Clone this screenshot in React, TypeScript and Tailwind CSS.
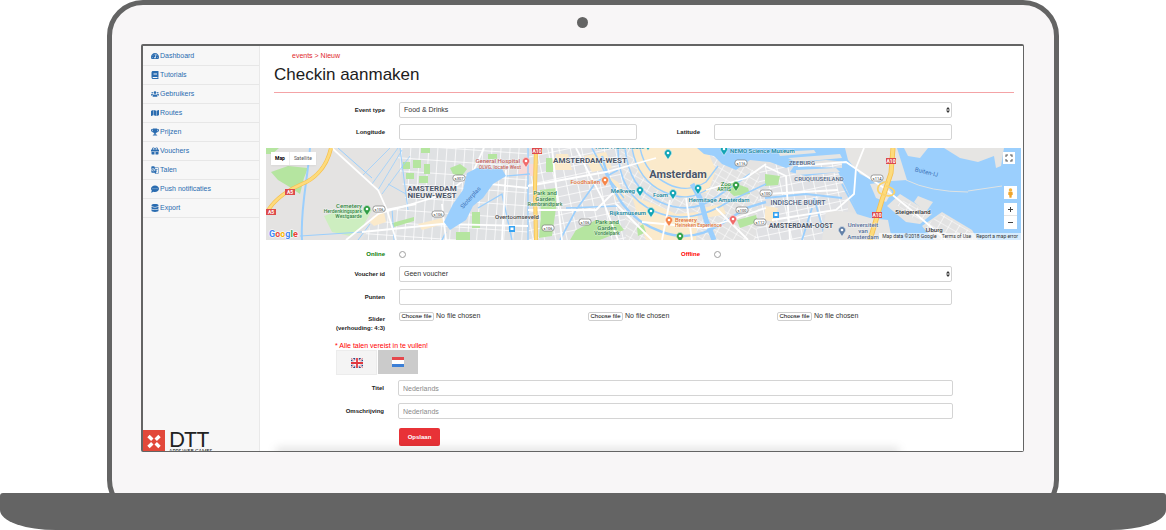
import React from 'react';
import {
  FaBook,
  FaCommentDots,
  FaDatabase,
  FaGift,
  FaMap,
  FaTachometerAlt,
  FaTrophy,
  FaUsers,
} from 'react-icons/fa';
import { MdFullscreen, MdGTranslate } from 'react-icons/md';

const navItems = [
  { label: 'Dashboard', icon: FaTachometerAlt },
  { label: 'Tutorials', icon: FaBook },
  { label: 'Gebruikers', icon: FaUsers },
  { label: 'Routes', icon: FaMap },
  { label: 'Prijzen', icon: FaTrophy },
  { label: 'Vouchers', icon: FaGift },
  { label: 'Talen', icon: MdGTranslate },
  { label: 'Push notificaties', icon: FaCommentDots },
  { label: 'Export', icon: FaDatabase },
];

const fieldClass =
  'block h-4 w-full rounded-xs border border-[#d4d4d4] bg-white px-1 text-[7px] leading-[14px] text-[#333] placeholder:text-[#8a8a8a]';
const labelClass = 'text-right text-[6px] font-bold text-[#222]';

function Sidebar() {
  return (
    <aside className="flex w-[117px] shrink-0 flex-col border-r border-[#e9e9e9] bg-[#f7f7f7] pt-px">
      <nav>
        {navItems.map(({ label, icon: Icon }) => (
          <a
            key={label}
            href="#"
            className="flex h-[19px] items-center gap-px border-b border-[#e7e7e7] pl-2 text-[7px] text-[#2a6cb0]"
          >
            <Icon className="size-2" />
            {label}
          </a>
        ))}
      </nav>
      <div className="mt-auto flex h-[21px] gap-1 overflow-hidden">
        <svg viewBox="0 0 22 22" className="size-[22px] shrink-0">
          <rect width="22" height="22" fill="#e2483a" />
          <path d="M5.5 6 L9.3 9.8 M16.5 6 L12.7 9.8 M5.5 17 L9.3 13.2 M16.5 17 L12.7 13.2" stroke="#fff" strokeWidth="3.4" />
        </svg>
        <div className="font-[Lato,sans-serif] text-[#222]">
          <div className="text-[21px] leading-[18px]">DTT</div>
          <div className="text-[5px] leading-[6px] whitespace-nowrap">APPS WEB GAMES</div>
        </div>
      </div>
    </aside>
  );
}

const places = [
  { text: 'General Hospital', x: 254, y: 15, size: 6, fill: '#bf625b', anchor: 'end' },
  { text: 'OLVG, locatie West', x: 255, y: 21, size: 5, fill: '#bf625b', anchor: 'end' },
  { text: 'Cemetery', x: 96, y: 60, size: 6, fill: '#2f8540', anchor: 'end' },
  { text: 'Herdenkingspark', x: 96, y: 65, size: 5, fill: '#2f8540', anchor: 'end' },
  { text: 'Westgaarde', x: 96, y: 70, size: 5, fill: '#2f8540', anchor: 'end' },
  { text: 'Overtoomseveld', x: 229, y: 71, size: 6, fill: '#444', anchor: 'start' },
  { text: 'Foodhallen', x: 334, y: 36, size: 6, fill: '#e07234', anchor: 'end' },
  { text: 'Park and', x: 279, y: 47, size: 6, fill: '#37834a', anchor: 'middle' },
  { text: 'Garden', x: 279, y: 53, size: 6, fill: '#37834a', anchor: 'middle' },
  { text: 'Rembrandtpark', x: 279, y: 58, size: 5, fill: '#37834a', anchor: 'middle' },
  { text: 'Park and', x: 341, y: 76, size: 6, fill: '#37834a', anchor: 'middle' },
  { text: 'Garden', x: 341, y: 82, size: 6, fill: '#37834a', anchor: 'middle' },
  { text: 'Vondelpark', x: 341, y: 87, size: 5, fill: '#37834a', anchor: 'middle' },
  { text: 'Anne Frank House', x: 354, y: 1, size: 6, fill: '#12839a', anchor: 'middle' },
  { text: 'Melkweg', x: 369, y: 45, size: 6, fill: '#12839a', anchor: 'end' },
  { text: 'Foam', x: 402, y: 49, size: 6, fill: '#12839a', anchor: 'end' },
  { text: 'Rijksmuseum', x: 380, y: 67, size: 6, fill: '#12839a', anchor: 'end' },
  { text: 'Hermitage Amsterdam', x: 453, y: 54, size: 6, fill: '#12839a', anchor: 'middle' },
  { text: 'NEMO Science Museum', x: 464, y: 5, size: 6, fill: '#12839a', anchor: 'start' },
  { text: 'Brewery', x: 409, y: 74, size: 6, fill: '#e07234', anchor: 'start' },
  { text: 'Heineken Experience', x: 409, y: 79, size: 5, fill: '#e07234', anchor: 'start' },
  { text: 'Zoo', x: 465, y: 38, size: 6, fill: '#2f8540', anchor: 'end' },
  { text: 'ARTIS', x: 465, y: 43, size: 5, fill: '#2f8540', anchor: 'end' },
  { text: 'ZEEBURG', x: 536, y: 17, size: 6, fill: '#4d6180', anchor: 'middle' },
  { text: 'CRUQUIUSEILAND', x: 553, y: 33, size: 6, fill: '#4d6180', anchor: 'middle' },
  { text: 'INDISCHE BUURT', x: 532, y: 57, size: 7, fill: '#4d6180', anchor: 'middle' },
  { text: 'Universiteit', x: 597, y: 79, size: 6, fill: '#506b96', anchor: 'middle' },
  { text: 'van', x: 597, y: 85, size: 6, fill: '#506b96', anchor: 'middle' },
  { text: 'Amsterdam', x: 597, y: 91, size: 6, fill: '#506b96', anchor: 'middle' },
  { text: 'Steigereiland', x: 647, y: 66, size: 6, fill: '#333', anchor: 'middle' },
  { text: 'IJburg', x: 668, y: 84, size: 6, fill: '#333', anchor: 'middle' },
] as const;

const districts = [
  { text: 'AMSTERDAM', x: 166, y: 43, size: 8 },
  { text: 'NIEUW-WEST', x: 166, y: 50, size: 8 },
  { text: 'AMSTERDAM-WEST', x: 324, y: 15, size: 8 },
  { text: 'Amsterdam', x: 412, y: 30, size: 11 },
  { text: 'AMSTERDAM-OOST', x: 535, y: 80, size: 7 },
];

const pins = [
  { x: 101, y: 62, fill: '#2f9e44' },
  { x: 260, y: 14, fill: '#f06a6a' },
  { x: 339, y: 33, fill: '#f58549' },
  { x: 374, y: 43, fill: '#12a4b5' },
  { x: 407, y: 46, fill: '#12a4b5' },
  { x: 385, y: 64, fill: '#12a4b5' },
  { x: 432, y: 41, fill: '#12a4b5' },
  { x: 403, y: 73, fill: '#f58549' },
  { x: 470, y: 38, fill: '#2f9e44' },
  { x: 402, y: 6, fill: '#12a4b5' },
  { x: 458, y: 2, fill: '#12a4b5' },
  { x: 382, y: -3, fill: '#12a4b5' },
  { x: 467, y: 72, fill: '#f06a6a' },
  { x: 414, y: 89, fill: '#2f9e44' },
  { x: 576, y: 83, fill: '#6482a8' },
];

const roadSigns = [
  { text: 's307', x: 193, y: 30 },
  { text: 's106', x: 113, y: 61 },
  { text: 's106', x: 172, y: 66 },
  { text: 's106', x: 282, y: 80 },
  { text: 's106', x: 319, y: 74 },
  { text: 's116', x: 475, y: 15 },
  { text: 's100', x: 476, y: 62 },
  { text: 's112', x: 494, y: 74 },
  { text: 's100', x: 500, y: 45 },
  { text: 's114', x: 611, y: 30 },
];

const motorwaySigns = [
  { text: 'A5', x: 24, y: 44 },
  { text: 'A5', x: 5, y: 64 },
  { text: 'A10', x: 271, y: 3 },
  { text: 'A10', x: 625, y: 13 },
  { text: 'A10', x: 611, y: 67 },
];

function CityMap() {
  return (
    <svg
      viewBox="0 0 755 92"
      preserveAspectRatio="xMidYMid slice"
      className="block h-[92px] w-full font-[Roboto,sans-serif]"
      role="img"
      aria-label="Amsterdam"
    >
      <defs>
        <pattern id="blocks" width="11" height="9" patternUnits="userSpaceOnUse" patternTransform="rotate(-12)">
          <rect width="11" height="9" fill="#e0e1e4" />
          <path d="M0 0 H11 M0 0 V9" stroke="#fff" strokeWidth="1.6" />
        </pattern>
        <pattern id="blocksWest" width="9" height="13" patternUnits="userSpaceOnUse" patternTransform="rotate(4)">
          <rect width="9" height="13" fill="#dfe1e3" />
          <path d="M0 0 H9 M0 0 V13" stroke="#fff" strokeWidth="1.5" />
        </pattern>
        <pattern id="blocksEast" width="9" height="7" patternUnits="userSpaceOnUse" patternTransform="rotate(30)">
          <rect width="9" height="7" fill="#e2e2e2" />
          <path d="M0 0 H9 M0 0 V7" stroke="#fff" strokeWidth="1.2" />
        </pattern>
      </defs>

      <rect width="755" height="92" fill="#e4e3e2" />
      <path d="M130 0 H262 V92 H96 L112 66 L140 56 Z" fill="url(#blocksWest)" />
      <path d="M262 0 H360 L372 92 H262 Z" fill="url(#blocks)" />
      <path d="M355 0 H450 L500 30 L500 92 H360 Z" fill="url(#blocksEast)" />
      <path d="M494 16 H582 V92 H490 Z" fill="url(#blocks)" />

      {/* commercial areas */}
      <g fill="#fbeacb">
        <path d="M366 0 H440 L450 22 L442 44 L418 50 L390 42 L372 24 Z" />
        <path d="M366 48 L388 56 L410 66 L432 64 L430 92 H380 L374 76 Z" />
        <path d="M290 6 H302 L306 22 H288 Z M342 28 L352 34 L360 50 L350 52 Z" />
        <path d="M318 8 L340 4 L346 20 L326 24 Z" />
        <path d="M107 68 L118 64 L120 74 L108 78 L104 74 Z" />
        <path d="M152 76 L176 70 L178 76 L156 82 Z" />
        <path d="M436 60 L456 56 L460 66 L440 70 Z" />
        <path d="M499 58 L512 60 L508 74 L499 72 Z" />
      </g>
      <path d="M254 16 H268 V28 H252 Z" fill="#f7dad8" />

      {/* parks */}
      <g fill="#b5e5a0">
        <path d="M0 0 H13 L6 6 H0 Z" />
        <path d="M5 24 L22 18 L42 20 L38 30 L34 46 L22 38 L12 32 Z" />
        <path d="M184 20 L194 16 L201 21 L196 28 L187 26 Z" />
        <path d="M126 75 L148 69 V73 L128 79 Z" />
        <path d="M137 14 h7 v7 h-7 z M147 12 h8 v8 h-8 z M158 16 h6 v10 h-6 z M140 25 h8 v6 h-8 z M153 28 h9 v7 h-9 z" />
        <path d="M155 0 h9 v5 h-9 z M222 6 h9 v5 h-9 z M206 64 h8 v16 h-8 z M190 84 h14 v8 h-14 z" />
        <path d="M274 42 L290 40 L290 60 L286 88 L273 90 L275 66 Z" />
        <path d="M304 92 L310 82 L330 72 L352 74 L358 82 L334 92 Z" />
        <path d="M371 80 L377 76 L380 84 L372 88 Z" />
        <path d="M457 38 L466 34 L482 40 L484 46 L468 48 Z" />
        <path d="M471 72 L490 67 L492 74 L474 80 Z" />
        <path d="M499 26 L514 28 L512 37 L499 38 Z" />
        <path d="M569 73 L582 75 L580 81 L571 79 Z" />
        <path d="M280 10 h7 v14 h-7 z" />
      </g>
      <path d="M58 68 L80 60 L106 62 L96 80 L84 88 L66 84 Z" fill="#cdeec0" />

      {/* water */}
      <g fill="#9bcffd">
        <path d="M431 0 H582 V14 L560 12 L536 14 L520 20 L504 14 L484 12 L470 22 L456 16 L448 8 L438 6 Z" />
        <path d="M576 0 H755 V92 H636 L616 80 L610 92 H600 L592 66 L580 40 L572 24 L540 28 L524 24 L528 18 L576 20 Z" />
      </g>
      <g fill="none" stroke="#9bcffd">
        <path d="M359 0 C362 28 372 44 394 54 S436 60 452 48 L484 26" strokeWidth="1.6" />
        <path d="M352 0 C352 34 366 54 390 64 S440 68 462 54 L500 36" strokeWidth="1.6" />
        <path d="M366 0 C370 22 380 36 398 44 S428 50 444 40" strokeWidth="1.4" />
        <path d="M374 0 C378 18 386 28 402 36 S430 40 440 34 L452 18" strokeWidth="1.4" />
        <path d="M336 8 C346 48 362 72 396 84 S450 80 480 60 L500 54" strokeWidth="2.4" />
        <path d="M426 36 L434 50 L440 72 L448 92" strokeWidth="5" />
        <path d="M44 0 C42 30 34 60 36 92" strokeWidth="2" />
        <path d="M262 0 L262 92 M240 28 L264 26 M212 60 L236 46 L246 92 M180 84 L176 92" strokeWidth="1.4" />
        <path d="M294 92 L310 62 L330 34 L352 22 M326 0 L342 30 L358 50 M300 60 L352 58" strokeWidth="1.6" />
        <path d="M112 42 L136 2 M116 46 L144 8 M96 28 L124 0 M122 36 L140 46 M106 36 L132 0" strokeWidth=".8" />
        <path d="M134 0 L142 62 M34 88 L96 84 M92 92 L104 76 M126 60 L128 92 M72 0 L106 30" strokeWidth="1" />
        <path d="M499 50 L540 46 L576 50 M548 50 L560 92 M576 36 L592 66 L580 92 M536 92 L546 60" strokeWidth="1.8" />
      </g>

      {/* land in the IJ */}
      <g fill="#e6e5e3">
        <path d="M579 0 H631 L641 32 L610 34 L594 26 L582 12 Z" />
        <path d="M638 0 H662 L654 10 L642 8 Z" />
        <path d="M678 0 H738 L735 18 L730 20 L728 8 L712 14 L694 10 Z" />
        <path d="M621 58 L634 46 L666 66 L654 76 L640 74 Z" />
        <path d="M652 48 L667 54 L660 64 L648 54 Z" />
        <path d="M656 78 L676 64 L706 82 L712 92 H668 Z" />
        <path d="M560 62 L584 64 L604 70 L622 72 L626 92 H556 Z" />
        <path d="M604 36 L618 34 L626 44 L620 54 L610 50 Z" />
        <path d="M512 4 L548 2 L550 5 L514 8 Z M522 10 L574 6 L576 10 L530 14 Z M530 22 L570 20 L574 24 L530 27 Z" />
      </g>
      <path d="M657 79 L676 66 L704 83 L708 92 H670 Z" fill="url(#blocksEast)" />
      <path d="M630 56 L640 52 L662 66 L652 74 Z" fill="url(#blocksEast)" />
      <path d="M702 43 L736 38 M702 44 Q664 44 640 32" fill="none" stroke="#dfe3e3" strokeWidth="1" />

      {/* roads */}
      <g fill="none" stroke="#fff" strokeWidth="1.8">
        <path d="M66 0 L112 42 L121 62 L130 92" />
        <path d="M80 92 L112 66 L180 46 L206 26 L218 0" />
        <path d="M96 84 L176 76 L262 78 M176 56 L180 92" />
        <path d="M120 62 L150 56 M240 22 L236 92 M224 36 L262 40" />
        <path d="M262 38 L340 24 L390 10 M286 0 L296 92 M262 62 L330 62 L352 40" />
        <path d="M310 0 L336 50 L352 92 M350 56 L386 92 M376 74 L440 80 L500 60" />
        <path d="M440 42 L480 30 L500 16 M450 60 L482 92 M404 52 L396 92 M420 50 L426 92" />
        <path d="M499 18 L520 28 L524 92 M500 46 L572 42 M506 72 L570 62 L588 46 L590 20 L598 0" />
        <path d="M532 18 L580 14 L618 40 L650 66 L680 92" />
      </g>
      <path
        d="M201 25 L211 20 L236 21 L240 28 L227 36 L217 50 L207 58 L200 72 L184 82 L178 74 L187 56 L197 42 Z"
        fill="#9bcffd"
      />
      <g fill="none">
        <path d="M65 0 C60 22 46 32 36 36 S8 50 0 66" stroke="#f6bf4c" strokeWidth="4" />
        <path d="M65 0 C60 22 46 32 36 36 S8 50 0 66" stroke="#fddb7c" strokeWidth="2.6" />
        <path d="M270 0 L269 40 L270 92" stroke="#f6bf4c" strokeWidth="4" />
        <path d="M270 0 L269 40 L270 92" stroke="#fddb7c" strokeWidth="2.6" />
        <path d="M627 0 L625 25 L616 52 L604 92" stroke="#f6bf4c" strokeWidth="5" />
        <path d="M627 0 L625 25 L616 52 L604 92" stroke="#fddb7c" strokeWidth="3.4" />
        <path d="M622 34 C608 34 610 48 618 46 M620 38 C636 42 626 52 616 46" stroke="#fbd36c" strokeWidth="1.8" />
      </g>

      {roadSigns.map((sign, i) => (
        <g key={i}>
          <rect x={sign.x - 6} y={sign.y - 3} width="12" height="6" rx="2.4" fill="#fff" stroke="#777" strokeWidth=".7" />
          <text x={sign.x} y={sign.y + 2} fontSize="4" textAnchor="middle" fill="#333">
            {sign.text}
          </text>
        </g>
      ))}
      {motorwaySigns.map((sign, i) => (
        <g key={i}>
          <rect x={sign.x - 5} y={sign.y - 3} width="10" height="6" fill="#dd4b4b" />
          <text x={sign.x} y={sign.y + 2} fontSize="5" fontWeight="700" textAnchor="middle" fill="#fff">
            {sign.text}
          </text>
        </g>
      ))}
      <g>
        <path d="M243 78 h6 v6 h-6 z M507 64 h6 v6 h-6 z" fill="#35a3f2" />
        <path d="M244.5 79.5 h3 v2.4 h-3 z M508.5 65.5 h3 v2.4 h-3 z" fill="#fff" />
      </g>

      {places.map((place) => (
        <text
          key={`${place.text}-${place.x}`}
          x={place.x}
          y={place.y}
          fontSize={place.size}
          fontWeight="500"
          fill={place.fill}
          textAnchor={place.anchor}
          stroke="#fff"
          strokeWidth="1"
          strokeOpacity=".5"
          paintOrder="stroke"
        >
          {place.text}
        </text>
      ))}
      {districts.map((district) => (
        <text
          key={district.text}
          x={district.x}
          y={district.y}
          fontSize={district.size}
          fontWeight="700"
          fill="#4c5567"
          textAnchor="middle"
          stroke="#fff"
          strokeWidth="1"
          strokeOpacity=".7"
          paintOrder="stroke"
        >
          {district.text}
        </text>
      ))}
      <text fontSize="6" fill="#3b72b8" textAnchor="middle" transform="translate(206 51) rotate(-48)">
        Sloterplas
      </text>
      <text fontSize="6" fill="#3b72b8" textAnchor="middle" transform="translate(660 26) rotate(14)">
        Buiten-IJ
      </text>

      {pins.map((pin, i) => (
        <g key={i} transform={`translate(${pin.x} ${pin.y})`}>
          <path d="M0 5.5 L-2.6 1.6 A3.6 3.6 0 1 1 2.6 1.6 Z" fill={pin.fill} stroke="#fff" strokeWidth=".5" />
          <circle cy="-1" r="1.3" fill="#fff" />
        </g>
      ))}

      <text x="3" y="89" fontSize="9" fontWeight="700" stroke="#fff" strokeWidth="1.2" paintOrder="stroke">
        <tspan fill="#4285f4">G</tspan>
        <tspan fill="#ea4335">o</tspan>
        <tspan fill="#f5b400">o</tspan>
        <tspan fill="#4285f4">g</tspan>
        <tspan fill="#34a853">l</tspan>
        <tspan fill="#ea4335">e</tspan>
      </text>
    </svg>
  );
}

function MapPanel() {
  return (
    <div className="relative mt-2 mr-[2px] ml-[6px] overflow-hidden font-[Roboto,sans-serif]">
      <CityMap />
      <div className="absolute top-1 left-[5px] flex h-[13px] items-center bg-white text-[5px] shadow-xs">
        <button type="button" className="h-full border-r border-[#eee] px-1 font-bold text-black">
          Map
        </button>
        <button type="button" className="h-full px-1 text-[#555]">
          Satellite
        </button>
      </div>
      <button
        type="button"
        aria-label="Fullscreen"
        className="absolute top-1 right-[6px] flex size-3 items-center justify-center bg-white text-[#555]"
      >
        <MdFullscreen className="size-3" />
      </button>
      <div className="absolute right-1 bottom-[11px] flex flex-col gap-1">
        <button type="button" aria-label="Street View" className="flex h-[13px] w-[13px] items-center justify-center bg-white">
          <svg viewBox="0 0 8 12" className="h-[10px] w-[7px]">
            <circle cx="4" cy="2.4" r="2.1" fill="#f3b23c" />
            <path d="M1.6 4.6 H6.4 L6.8 8 L5.6 8.4 L5.2 11.6 H2.8 L2.4 8.4 L1.2 8 Z" fill="#eea42c" />
          </svg>
        </button>
        <div className="flex w-[13px] flex-col divide-y divide-[#e4e4e4] bg-white">
          <button type="button" aria-label="Zoom in" className="flex h-[13px] items-center justify-center">
            <svg viewBox="0 0 5 5" className="size-[5px]">
              <path d="M0 2.5 H5 M2.5 0 V5" stroke="#444" />
            </svg>
          </button>
          <button type="button" aria-label="Zoom out" className="flex h-[13px] items-center justify-center">
            <svg viewBox="0 0 5 5" className="size-[5px]">
              <path d="M0 2.5 H5" stroke="#444" />
            </svg>
          </button>
        </div>
      </div>
      <div className="absolute right-0 bottom-0 flex h-[7px] items-center gap-[5px] bg-white/60 px-[3px] text-[5px] text-[#333]">
        <span>Map data ©2018 Google</span>
        <a href="#">Terms of Use</a>
        <a href="#">Report a map error</a>
      </div>
    </div>
  );
}

function SelectField({ id, value }: { id: string; value: string }) {
  return (
    <div className="relative">
      <select id={id} defaultValue={value} className={`${fieldClass} appearance-none`}>
        <option>{value}</option>
      </select>
      <svg viewBox="0 0 4 6" className="pointer-events-none absolute top-[5px] right-[2px] h-[6px] w-1">
        <path d="M2 0 L4 2.4 H0 Z M2 6 L4 3.6 H0 Z" fill="#333" />
      </svg>
    </div>
  );
}

function FileField({ id }: { id: string }) {
  return (
    <label htmlFor={id} className="flex cursor-pointer items-start gap-[2px] text-[#333]">
      <input id={id} type="file" className="sr-only" />
      <span className="mt-px flex h-[9px] w-[35px] items-center justify-center rounded-xs border border-[#cfcfcf] bg-white text-[6px] whitespace-nowrap text-black">
        Choose file
      </span>
      No file chosen
    </label>
  );
}

function FlagUK() {
  return (
    <svg viewBox="0 0 24 20" className="h-[10px] w-3">
      <rect width="24" height="20" rx="2" fill="#2d4b86" />
      <path d="M0 0 L24 20 M24 0 L0 20" stroke="#fff" strokeWidth="4" />
      <path d="M0 0 L24 20 M24 0 L0 20" stroke="#e05a5f" strokeWidth="1.4" />
      <path d="M12 0 V20 M0 10 H24" stroke="#fff" strokeWidth="7" />
      <path d="M12 0 V20 M0 10 H24" stroke="#e0383f" strokeWidth="3.6" />
    </svg>
  );
}

function FlagNL() {
  return (
    <svg viewBox="0 0 12 10" className="h-[10px] w-3">
      <rect width="12" height="10" fill="#fff" />
      <rect width="12" height="3" fill="#e5484d" />
      <rect y="7" width="12" height="3" fill="#3c7fd6" />
    </svg>
  );
}

function CheckinForm() {
  const row = 'grid grid-cols-[125px_1fr] items-center gap-x-[14px] pr-[71px]';
  const splitRow = 'grid grid-cols-[125px_1fr_49px_1fr] items-center gap-x-[14px] pr-[71px]';
  const langRow = 'grid grid-cols-[124px_1fr] items-center gap-x-[14px] pr-[70px]';

  return (
    <form className="mt-[9px] text-[7px] leading-[9px]">
      <div className={row}>
        <label htmlFor="event-type" className={labelClass}>Event type</label>
        <SelectField id="event-type" value="Food & Drinks" />
      </div>
      <div className={`${splitRow} mt-[6px]`}>
        <label htmlFor="longitude" className={labelClass}>Longitude</label>
        <input id="longitude" type="text" className={fieldClass} />
        <label htmlFor="latitude" className={labelClass}>Latitude</label>
        <input id="latitude" type="text" className={fieldClass} />
      </div>

      <MapPanel />

      <div className={`${splitRow} mt-[10px]`}>
        <label htmlFor="online" className="text-right text-[6px] font-bold text-[#0a7d0a]">Online</label>
        <input id="online" name="status" type="radio" className="size-[7px] appearance-none rounded-full border border-[#a0a0a0]" />
        <label htmlFor="offline" className="text-right text-[6px] font-bold text-[#f00]">Offline</label>
        <input id="offline" name="status" type="radio" className="size-[7px] appearance-none rounded-full border border-[#a0a0a0]" />
      </div>
      <div className={`${row} mt-[7px]`}>
        <label htmlFor="voucher" className={labelClass}>Voucher id</label>
        <SelectField id="voucher" value="Geen voucher" />
      </div>
      <div className={`${row} mt-[7px]`}>
        <label htmlFor="punten" className={labelClass}>Punten</label>
        <input id="punten" type="text" className={fieldClass} />
      </div>
      <div className="mt-[6px] grid grid-cols-[125px_1fr] gap-x-[14px] pr-[57px]">
        <div className={`${labelClass} pt-1`}>
          Slider
          <br />
          (verhouding: 4:3)
        </div>
        <div className="grid grid-cols-3 items-start">
          <FileField id="slider-1" />
          <FileField id="slider-2" />
          <FileField id="slider-3" />
        </div>
      </div>

      <p className="mt-2 pl-[75px] text-[#f00]">* Alle talen vereist in te vullen!</p>
      <div className="flex items-start gap-px pl-[76px]">
        <button type="button" aria-label="Engels" className="flex h-[25px] w-[41px] items-center justify-center border border-[#ececec] bg-[#f4f4f4]">
          <FlagUK />
        </button>
        <button type="button" aria-label="Nederlands" className="flex h-6 w-10 items-center justify-center bg-[#cbcbcb]">
          <FlagNL />
        </button>
      </div>
      <div className={`${langRow} mt-[5px]`}>
        <label htmlFor="titel" className={labelClass}>Titel</label>
        <input id="titel" type="text" placeholder="Nederlands" className={fieldClass} />
      </div>
      <div className={`${langRow} mt-[7px]`}>
        <label htmlFor="omschrijving" className={labelClass}>Omschrijving</label>
        <input id="omschrijving" type="text" placeholder="Nederlands" className={fieldClass} />
      </div>
      <button type="submit" className="mt-[9px] ml-[139px] flex h-[18px] w-[41px] items-center justify-center rounded-xs bg-[#e83237] text-[6px] font-bold text-white">
        Opslaan
      </button>
    </form>
  );
}

export default function App() {
  return (
    <div className="overflow-hidden bg-white font-['Liberation_Sans',Arial,sans-serif]">
      <div className="mx-[107px] rounded-[36px] border-[5px] border-[#646464] bg-[#f8f6f7] pt-3 pr-[30px] pb-[59px] pl-[29px]">
        <div className="mx-auto size-[11px] rounded-full bg-[#646464]" />

        <div className="mt-4 flex rounded-xs border border-t-2 border-l-2 border-[#646464] bg-white">
          <Sidebar />
          <main className="relative min-w-0 flex-1 overflow-hidden bg-white pb-[5px]">
            <div className="pt-[5px] pl-8 text-[7px] leading-[10px] text-[#e0262c]">
              <a href="#">events</a> &gt; <a href="#">Nieuw</a>
            </div>
            <h1 className="mr-[9px] ml-[14px] border-b border-[#f4a3a6] pt-[2px] pb-[5px] text-[17px] leading-6 text-[#1c1c1c]">
              Checkin aanmaken
            </h1>
            <CheckinForm />
            <div className="pointer-events-none absolute right-[124px] -bottom-2 left-4 h-3 bg-black/10 blur-[4px]" />
          </main>
        </div>
      </div>
      <div className="relative -mt-[23px] h-[37px] rounded-[3px_3px_56px_56px/3px_3px_20px_20px] bg-[#646464]" />
    </div>
  );
}
